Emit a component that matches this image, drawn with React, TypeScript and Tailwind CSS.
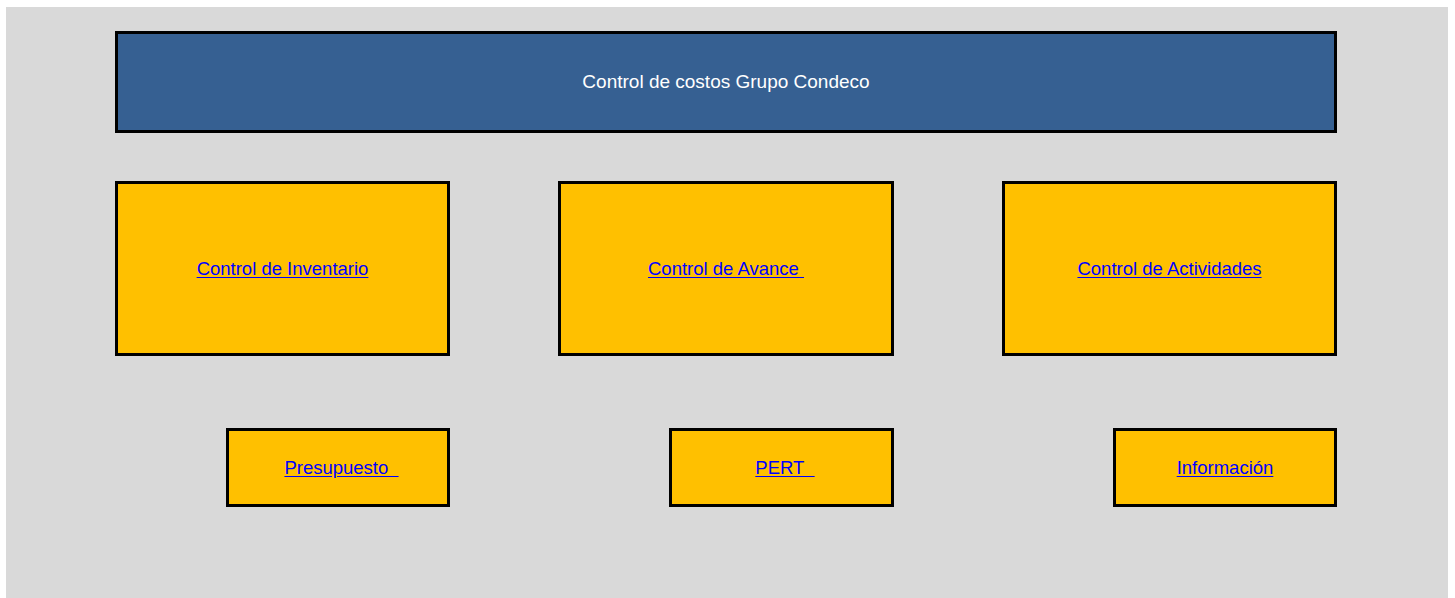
const mainLinks = ["Control de Inventario", "Control de Avance\u00a0", "Control de Actividades"];
const subLinks = [
  { label: "Presupuesto\u00a0\u00a0", box: "w-[224px] pl-[7px]" },
  { label: "PERT\u00a0\u00a0", box: "w-[225px] pl-[7px]" },
  { label: "Información", box: "w-[224px]" },
];

function LinkBox({ label, className }: { label: string; className: string }) {
  return (
    <div
      className={`flex items-center justify-center border-[3px] border-black bg-[#ffc000] ${className}`}
    >
      <a href="#" className="text-[#0000ff] underline underline-offset-2">
        {label}
      </a>
    </div>
  );
}

export default function App() {
  return (
    <div className="min-h-[598px] bg-white pl-[6px] pt-[7px] font-['Liberation_Sans',Arial,sans-serif] text-[18.5px]">
      <div className="h-[591px] w-[1442px] bg-[#d9d9d9] pl-[109px] pt-[24px]">
        <div className="flex h-[102px] w-[1222px] items-center justify-center border-[3px] border-black bg-[#366092] text-[19px] text-white">
          Control de costos Grupo Condeco
        </div>
        <div className="mt-[48px] grid w-[1222px] grid-cols-[335px_336px_335px] gap-x-[108px]">
          {mainLinks.map((label) => (
            <LinkBox key={label} label={label} className="h-[175px]" />
          ))}
        </div>
        <div className="mt-[72px] grid w-[1222px] grid-cols-[335px_336px_335px] gap-x-[108px]">
          {subLinks.map(({ label, box }) => (
            <div key={label} className="flex justify-end">
              <LinkBox label={label} className={`h-[79px] ${box}`} />
            </div>
          ))}
        </div>
      </div>
    </div>
  );
}
